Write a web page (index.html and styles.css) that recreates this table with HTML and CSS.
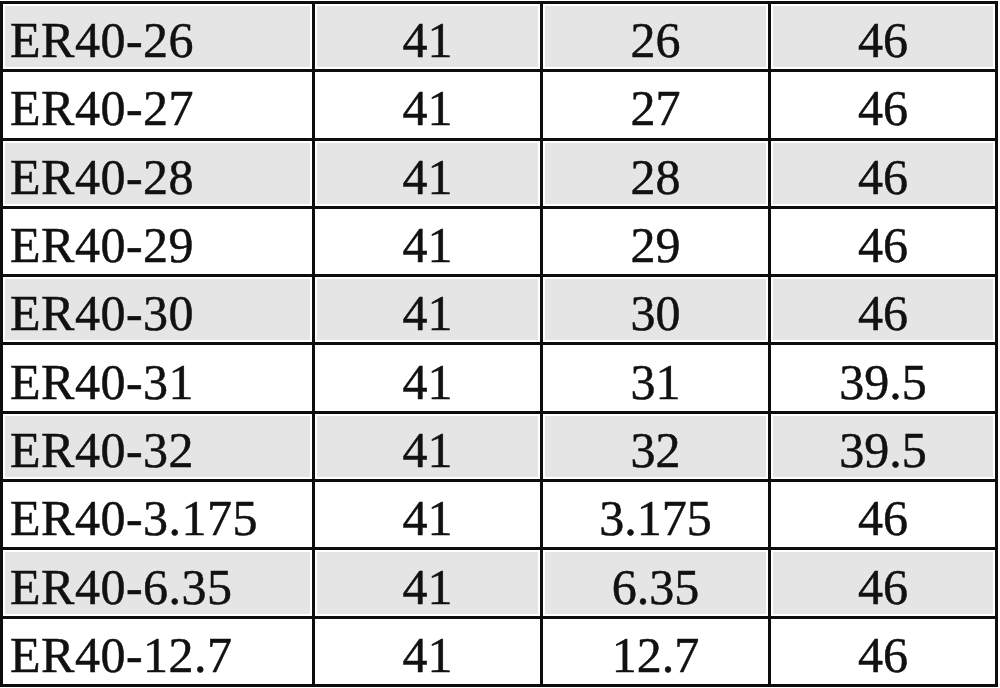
FILE: index.html
```html
<!DOCTYPE html>
<html lang="zh">
<head>
<meta charset="utf-8">
<title>ER40</title>
<link rel="stylesheet" href="styles.css">
</head>
<body>
<table class="spec">
  <colgroup>
    <col class="c-name"><col class="c-num"><col class="c-num"><col class="c-last">
  </colgroup>
  <tbody>
    <tr class="alt"><td class="name">ER40-26</td><td>41</td><td>26</td><td>46</td></tr>
    <tr><td class="name">ER40-27</td><td>41</td><td>27</td><td>46</td></tr>
    <tr class="alt"><td class="name">ER40-28</td><td>41</td><td>28</td><td>46</td></tr>
    <tr><td class="name">ER40-29</td><td>41</td><td>29</td><td>46</td></tr>
    <tr class="alt"><td class="name">ER40-30</td><td>41</td><td>30</td><td>46</td></tr>
    <tr><td class="name">ER40-31</td><td>41</td><td>31</td><td>39.5</td></tr>
    <tr class="alt"><td class="name">ER40-32</td><td>41</td><td>32</td><td>39.5</td></tr>
    <tr><td class="name">ER40-3.175</td><td>41</td><td>3.175</td><td>46</td></tr>
    <tr class="alt"><td class="name">ER40-6.35</td><td>41</td><td>6.35</td><td>46</td></tr>
    <tr><td class="name">ER40-12.7</td><td>41</td><td>12.7</td><td>46</td></tr>
  </tbody>
</table>
</body>
</html>
```
FILE: styles.css
```css
html, body {
  margin: 0;
  padding: 0;
  background: #fff;
}
body {
  padding-top: 1px;
}
.spec {
  width: 998px;
  height: 686px;
  table-layout: fixed;
  border-collapse: separate;
  border-spacing: 3px;
  background: #0d0d0d;
  font-family: "Liberation Serif", "Times New Roman", serif;
  font-size: 50px;
  color: #111;
  -webkit-text-stroke: 0.5px #111;
}
.c-name { width: 309px; }
.c-num { width: 225px; }
.c-last { width: 224px; }
.spec td {
  background: #fff;
  border: 2px solid #fff;
  padding: 7px 0 0;
  line-height: 50px;
  text-align: center;
  vertical-align: middle;
  white-space: nowrap;
}
.spec tr.alt td {
  background: #e5e5e5;
}
.spec td.name {
  text-align: left;
  padding-left: 5px;
  letter-spacing: 0.5px;
}
```
